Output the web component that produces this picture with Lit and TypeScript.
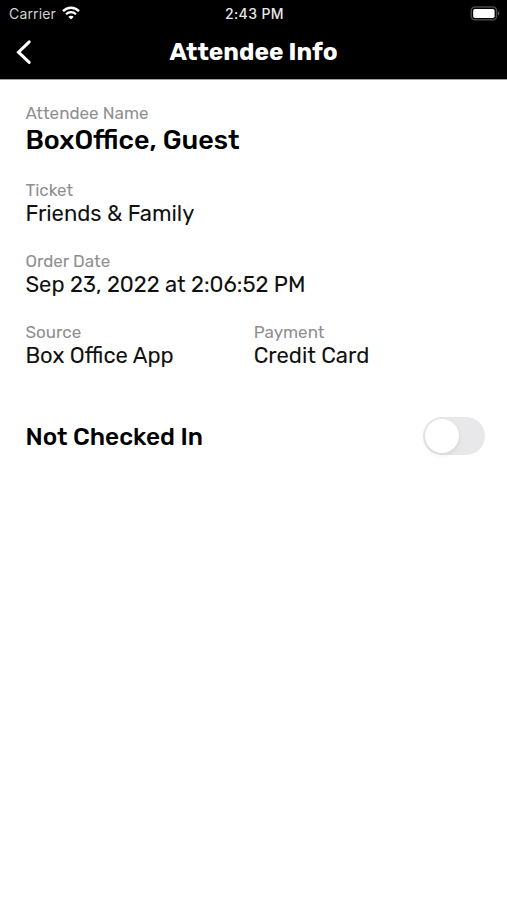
import { LitElement, html, css } from "lit";
import { customElement, property, state } from "lit/decorators.js";
import { classMap } from "lit/directives/class-map.js";

@customElement("status-bar")
class StatusBar extends LitElement {
  static styles = css`
    :host {
      display: grid;
      grid-template-columns: 1fr auto 1fr;
      align-items: center;
      height: 27px;
      padding: 0 7px 0 9px;
      color: #e8e8e8;
      font: 400 14px/27px Inter, sans-serif;
    }
    .carrier { display: flex; align-items: center; gap: 6px; color: #d2d2d2; letter-spacing: 0.15px; }
    .time { font-size: 14px; font-weight: 500; letter-spacing: 0.4px; }
    .battery { justify-self: end; display: block; margin-top: -1px; }
    .wifi { display: block; margin-top: -1px; }
  `;
  render() {
    return html`
      <div class="carrier">
        <span>Carrier</span>
        <svg class="wifi" width="18" height="14" viewBox="0 0 18 14" fill="none" stroke="#fff">
          <path d="M1 5.2C5.6.6 12.4.6 17 5.2" stroke-width="2.4" />
          <path d="M4 8.3C6.9 5.4 11.1 5.4 14 8.3" stroke-width="2.1" />
          <path d="M9 13.6L6.3 10.8C7.8 9.4 10.2 9.4 11.7 10.8Z" fill="#fff" stroke="none" />
        </svg>
      </div>
      <span class="time">2:43 PM</span>
      <svg class="battery" width="30" height="15" viewBox="0 0 30 15">
        <rect x="1.2" y="1" width="25.4" height="12.8" rx="3.8" fill="none" stroke="#484848" stroke-width="1.5" />
        <rect x="3.2" y="3" width="21.4" height="9" rx="1.8" fill="#fff" />
        <path d="M28 5.2C30 6 30 8.8 28 9.6Z" fill="#555" />
      </svg>
    `;
  }
}

@customElement("info-field")
class InfoField extends LitElement {
  @property() label = "";
  @property() value = "";
  @property({ type: Boolean }) prominent = false;
  static styles = css`
    :host { display: block; font-family: Rubik, Roboto, sans-serif; }
    .label { font-size: 17px; line-height: 20px; color: #8f8f8f; }
    .value { font-size: 22px; line-height: 27px; color: #111; white-space: nowrap; }
    .prominent { font-size: 26.9px; line-height: 33px; padding-top: 1px; margin-bottom: -1px; font-weight: 500; color: #000; }
  `;
  render() {
    return html`
      <div class="label">${this.label}</div>
      <div class=${classMap({ value: true, prominent: this.prominent })}>${this.value}</div>
    `;
  }
}

@customElement("toggle-switch")
class ToggleSwitch extends LitElement {
  @property({ type: Boolean }) on = false;
  static styles = css`
    :host { display: block; }
    .track {
      display: flex;
      box-sizing: border-box;
      width: 62.6px;
      height: 38px;
      padding: 2px;
      border-radius: 19px;
      background: #e8e8ea;
    }
    .on { justify-content: flex-end; background: #34c759; }
    .thumb {
      width: 34px;
      height: 34px;
      border-radius: 50%;
      background: #fff;
      box-shadow: 0 2px 5px rgba(0, 0, 0, 0.09);
    }
  `;
  render() {
    return html`<div class=${classMap({ track: true, on: this.on })}><div class="thumb"></div></div>`;
  }
}

@customElement("app-root")
class AppRoot extends LitElement {
  @state() private checkedIn = false;
  static styles = css`
    :host {
      display: block;
      min-height: 900px;
      background: #fff;
      font-family: Rubik, Roboto, sans-serif;
    }
    .header { background: #000; border-bottom: 1px solid #a0a0a0; }
    .nav {
      display: grid;
      grid-template-columns: 48px 1fr 48px;
      height: 52px;
    }
    .back { display: block; margin: 12px 0 0 15px; }
    .title {
      margin: 0;
      color: #fff;
      text-align: center;
      font-size: 24.4px;
      line-height: 49px;
      font-weight: 700;
    }
    .content { padding: 23px 21.8px 0 25.4px; }
    .fields { display: grid; grid-template-columns: 228.3px 1fr; row-gap: 24px; }
    .wide { grid-column: 1 / -1; }
    .check { display: flex; align-items: center; justify-content: space-between; margin-top: 48.4px; }
    .check-label { font-size: 24.4px; font-weight: 500; color: #000; }
  `;
  render() {
    return html`
      <div class="header">
        <status-bar></status-bar>
        <div class="nav">
          <svg class="back" width="18" height="26" viewBox="0 0 18 26" fill="none" stroke="#fff" stroke-width="3" stroke-linecap="round">
            <path d="M14.2 2.8L3.5 13.2L14.2 23.4" />
          </svg>
          <h1 class="title">Attendee Info</h1>
        </div>
      </div>
      <div class="content">
        <div class="fields">
          <info-field class="wide" label="Attendee Name" value="BoxOffice, Guest" prominent></info-field>
          <info-field class="wide" label="Ticket" value="Friends &amp; Family"></info-field>
          <info-field class="wide" label="Order Date" value="Sep 23, 2022 at 2:06:52 PM"></info-field>
          <info-field label="Source" value="Box Office App"></info-field>
          <info-field label="Payment" value="Credit Card"></info-field>
        </div>
        <div class="check">
          <span class="check-label">${this.checkedIn ? "Checked In" : "Not Checked In"}</span>
          <toggle-switch ?on=${this.checkedIn}></toggle-switch>
        </div>
      </div>
    `;
  }
}
